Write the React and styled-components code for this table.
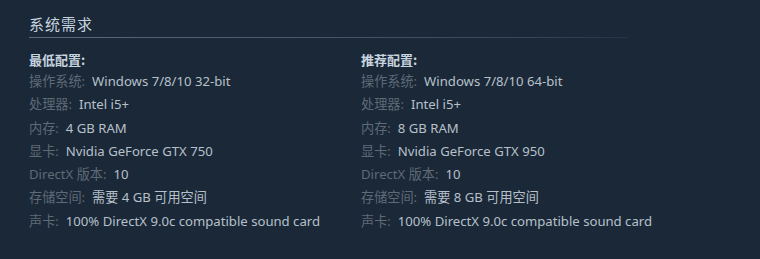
import React from "react";
import styled, { createGlobalStyle } from "styled-components";

const Global = createGlobalStyle`
  html, body { margin: 0; padding: 0; background: #1b2838; }
  body { font-family: "Noto Sans", "Noto Sans CJK SC", sans-serif; }
`;

const Page = styled.div`
  width: 760px;
  height: 259px;
  box-sizing: border-box;
  padding: 13px 0 0 29px;
  background: #1b2838;
`;

const Header = styled.h2`
  margin: 0;
  width: 599px;
  height: 25px;
  font-size: 15px;
  font-weight: normal;
  letter-spacing: 1px;
  line-height: 21px;
  color: #c6d4df;
  font-family: "Noto Sans CJK SC", sans-serif;
  background: linear-gradient(to right, #5c6b7a 0%, #46566a 50%, #34445a 85%, rgba(52, 68, 90, 0.4) 100%) no-repeat left bottom / 100% 1px;
`;

const Columns = styled.div`
  display: grid;
  grid-template-columns: 332px 332px;
  margin-top: 13px;
`;

const Col = styled.div``;

const Title = styled.div`
  font-family: "Noto Sans CJK SC", sans-serif;
  font-size: 13px;
  font-weight: bold;
  color: #c6d4df;
  line-height: 18px;
  margin-bottom: 3px;
`;

const List = styled.ul`
  list-style: none;
  margin: 0;
  padding: 0;
`;

const Item = styled.li`
  font-size: 13.15px;
  line-height: 18px;
  color: #b6c0ca;
  margin-bottom: 5.3px;
  white-space: nowrap;
`;

const Label = styled.span`
  color: #5e6a76;
  font-family: "Noto Sans", "Noto Sans CJK SC", sans-serif;
  margin-right: 7px;
`;

const data = [
  {
    title: "最低配置:",
    rows: [
      ["操作系统:", "Windows 7/8/10 32-bit"],
      ["处理器:", "Intel i5+"],
      ["内存:", "4 GB RAM"],
      ["显卡:", "Nvidia GeForce GTX 750"],
      ["DirectX 版本:", "10"],
      ["存储空间:", "需要 4 GB 可用空间"],
      ["声卡:", "100% DirectX 9.0c compatible sound card"],
    ],
  },
  {
    title: "推荐配置:",
    rows: [
      ["操作系统:", "Windows 7/8/10 64-bit"],
      ["处理器:", "Intel i5+"],
      ["内存:", "8 GB RAM"],
      ["显卡:", "Nvidia GeForce GTX 950"],
      ["DirectX 版本:", "10"],
      ["存储空间:", "需要 8 GB 可用空间"],
      ["声卡:", "100% DirectX 9.0c compatible sound card"],
    ],
  },
];

export default function App() {
  return (
    <>
      <Global />
      <Page>
        <Header>系统需求</Header>
        <Columns>
          {data.map((c) => (
            <Col key={c.title}>
              <Title>{c.title}</Title>
              <List>
                {c.rows.map(([l, v]) => (
                  <Item key={l}>
                    <Label>{l}</Label>
                    {v}
                  </Item>
                ))}
              </List>
            </Col>
          ))}
        </Columns>
      </Page>
    </>
  );
}
